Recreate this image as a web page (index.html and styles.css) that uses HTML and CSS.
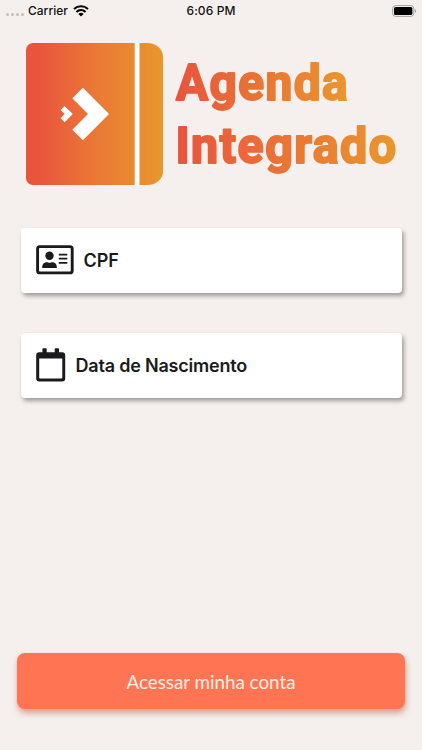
FILE: index.html
```
<!DOCTYPE html>
<html lang="pt-BR">
<head>
    <meta charset="UTF-8">
    <meta name="viewport" content="width=device-width, initial-scale=1.0">
    <title>Agenda Integrado</title>
    <link rel="stylesheet" href="styles.css">
</head>
<body>
    <header class="status-bar">
        <div class="status-left">
            <span class="signal"><i></i><i></i><i></i><i></i></span>
            <span class="carrier">Carrier</span>
            <svg class="wifi" width="16" height="12" viewBox="0 0 16 12">
                <path d="M1 4.100a10.200 10.200 0 0 1 14 0M3.400 6.900a6.700 6.700 0 0 1 9.200 0" fill="none" stroke="#000" stroke-width="2.100"/>
                <path d="M8 11.600 5.400 9a3.800 3.800 0 0 1 5.200 0z"/>
            </svg>
        </div>
        <span class="clock">6:06 PM</span>
        <div class="status-right">
            <svg width="25" height="12" viewBox="0 0 25 12">
                <rect x=".6" y=".6" width="21.2" height="10.8" rx="3" fill="none" stroke="#a5a1a0"/>
                <rect x="2" y="2" width="18.4" height="8" rx="1.6"/>
                <path d="M23 4v4c1.600-.6 1.600-3.400 0-4z" fill="#a5a1a0"/>
            </svg>
        </div>
    </header>

    <main class="login">
        <svg class="logo" width="380" height="150" viewBox="25 42 380 150">
            <defs>
                <linearGradient id="book" gradientUnits="userSpaceOnUse" x1="38" y1="0" x2="163" y2="0">
                    <stop offset="0" stop-color="#e9543d"/>
                    <stop offset=".5" stop-color="#ea7b35"/>
                    <stop offset="1" stop-color="#e9962d"/>
                </linearGradient>
                <linearGradient id="line1" gradientUnits="userSpaceOnUse" x1="176" y1="0" x2="348" y2="0">
                    <stop offset="0" stop-color="#e9543d"/>
                    <stop offset="1" stop-color="#ea962d"/>
                </linearGradient>
                <linearGradient id="line2" gradientUnits="userSpaceOnUse" x1="177" y1="0" x2="396" y2="0">
                    <stop offset="0" stop-color="#e9543d"/>
                    <stop offset="1" stop-color="#ea962d"/>
                </linearGradient>
            </defs>
            <!-- caderno -->
            <path d="M33 43h114.500a15.500 13.500 0 0 1 15.500 13.500v115a15.500 13.500 0 0 1-15.500 13.500H33a7 7 0 0 1-7-7V50a7 7 0 0 1 7-7z" fill="url(#book)"/>
            <path d="M134.700 42.500h4.800v143h-4.800z" fill="#fff"/>
            <path d="M72.300 98.300 82.900 87.700 109 114 82.900 140.300 72.300 129.700 88 114zM60.600 109.900 64.600 105.900 72.800 114.100 64.600 122.300 60.600 118.300 64.600 114.100z" fill="#fff"/>
            <!-- nome -->
            <text class="logo-text" x="176" y="100.300" textLength="173" lengthAdjust="spacingAndGlyphs" fill="url(#line1)" stroke="url(#line1)">Agenda</text>
            <text class="logo-text" x="175.500" y="162.800" textLength="222" lengthAdjust="spacingAndGlyphs" fill="url(#line2)" stroke="url(#line2)">Integrado</text>
        </svg>

        <div class="field">
            <svg width="38" height="30" viewBox="0 0 38 30">
                <rect x="1.600" y="1.600" width="34.600" height="26.300" rx="2.200" fill="none" stroke="#1a1a1c" stroke-width="2.900"/>
                <circle cx="13.500" cy="10.700" r="4.200"/>
                <path d="M6.200 22.900v-1.200a4.400 4.400 0 0 1 4.400-4.400c1.200 0 1.500.5 2.900.5s1.700-.5 2.900-.5a4.400 4.400 0 0 1 4.400 4.400v1.200zM22.800 8.700h8.500v1.900h-8.500zM22.800 12.700h8.500v1.900h-8.500zM22.800 16.900h8.500v1.900h-8.500z"/>
            </svg>
            <span>CPF</span>
        </div>

        <div class="field field-date">
            <svg width="30" height="34" viewBox="0 0 30 34">
                <path d="M3.200 4.300H6.400V1.100q0-.8.800-.8h2.700q.8 0 .8.800v3.200h8V1.100q0-.8.800-.8h2.700q.8 0 .8.800v3.200h3.200a3 3 0 0 1 3 3v23.200a3 3 0 0 1-3 3h-23a3 3 0 0 1-3-3V7.300a3 3 0 0 1 3-3zM3.200 10.500v19.300q0 .7.700.7h21.700q.7 0 .7-.7V10.500z" fill-rule="evenodd"/>
            </svg>
            <span>Data de Nascimento</span>
        </div>

        <button class="btn-access">Acessar minha conta</button>
    </main>
</body>
</html>
```
FILE: styles.css
```
* {
    margin: 0;
    padding: 0;
    box-sizing: border-box;
}

body {
    display: flex;
    flex-direction: column;
    height: 100vh;
    background: #f5f0ee;
    font-family: Inter, "Liberation Sans", sans-serif;
}

.status-bar {
    display: grid;
    grid-template-columns: 1fr auto 1fr;
    align-items: center;
    height: 21px;
    padding: 0 6px;
    font-size: 12px;
    font-weight: 500;
    color: #111;
}

.status-left {
    display: flex;
    align-items: center;
}

.signal {
    display: flex;
    gap: 2px;
    margin: 8px 4px 0 0;
}

.signal i {
    width: 3px;
    height: 3px;
    border-radius: 50%;
    background: #c3bfbd;
}

.wifi {
    margin-left: 5px;
}

.clock {
    letter-spacing: 0.1px;
}

.status-right {
    display: flex;
    justify-content: flex-end;
    margin-right: -1px;
}

.login {
    flex: 1;
    display: flex;
    flex-direction: column;
    padding: 21px 17px 41px;
}

.logo {
    margin: 0 0 36.3px 8px;
    overflow: visible;
}

.logo-text {
    font-family: Roboto, sans-serif;
    font-size: 49.5px;
    font-weight: 700;
    letter-spacing: 1.5px;
    stroke-width: 2px;
    stroke-linejoin: round;
}

.field {
    display: flex;
    align-items: center;
    gap: 10px;
    height: 64.4px;
    margin: 0 3.5px 40.6px;
    padding: 0 15px;
    background: #fff;
    border-radius: 4px;
    box-shadow: 2px 3px 4px rgba(60, 50, 48, 0.45);
    font-size: 18px;
    font-weight: 600;
    color: #1a1a1c;
}

.field svg {
    fill: #1a1a1c;
}

.field-date {
    letter-spacing: -0.2px;
}

.btn-access {
    height: 56px;
    margin-top: auto;
    border: none;
    border-radius: 8px;
    background: #ff7452;
    box-shadow: 1px 4px 6px rgba(190, 90, 60, 0.55);
    color: #fff0e8;
    font-family: Lato, sans-serif;
    font-size: 18.8px;
    cursor: pointer;
}
```
